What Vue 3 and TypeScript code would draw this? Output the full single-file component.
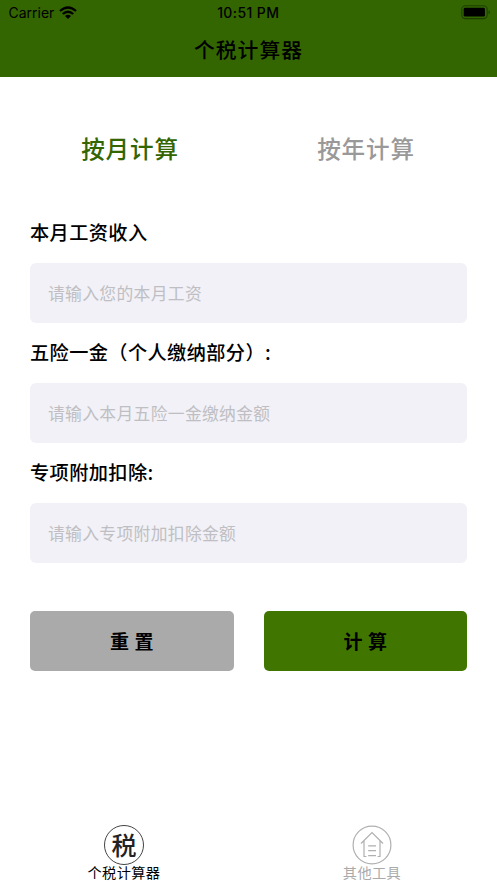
<script setup lang="ts">
import { reactive, ref } from 'vue'

interface Field {
  key: string
  label: string
  placeholder: string
}

const modes: string[] = ['按月计算', '按年计算']
const activeMode = ref(0)

const fields: Field[] = [
  { key: 'salary', label: '本月工资收入', placeholder: '请输入您的本月工资' },
  { key: 'insurance', label: '五险一金（个人缴纳部分）:', placeholder: '请输入本月五险一金缴纳金额' },
  { key: 'deduction', label: '专项附加扣除:', placeholder: '请输入专项附加扣除金额' },
]

const values = reactive<Record<string, string>>({ salary: '', insurance: '', deduction: '' })

function reset(): void {
  fields.forEach((f) => (values[f.key] = ''))
}
</script>

<template>
  <div class="screen">
    <header class="header">
      <div class="status">
        <div class="carrier">
          <span>Carrier</span>
          <svg class="wifi" viewBox="0 0 18 13" width="18" height="13">
            <path d="M0.2 4.2 Q9 -3.8 17.8 4.2 L16.2 5.8 Q9 -0.4 1.8 5.8 Z" />
            <path d="M3 7.2 Q9 1.8 15 7.2 L13.3 8.8 Q9 5.2 4.7 8.8 Z" />
            <path d="M6 10 Q9 7.4 12 10 L9 13 Z" />
          </svg>
        </div>
        <span class="time">10:51 PM</span>
        <svg class="battery" viewBox="0 0 30 15" width="30" height="15">
          <rect x="0.8" y="0.8" width="25.4" height="12.8" rx="3.6" fill="none" stroke="#1f3f00" stroke-width="1.1" />
          <rect x="2.7" y="2.8" width="21.2" height="8.8" rx="1.4" />
          <path d="M27.6 5.2 Q28.9 5.8 28.9 7.2 Q28.9 8.6 27.6 9.2 Z" fill="#1f3f00" />
        </svg>
      </div>
      <h1 class="title">个税计算器</h1>
    </header>

    <nav class="modes">
      <button
        v-for="(mode, i) in modes"
        :key="mode"
        class="mode"
        :class="{ active: i === activeMode }"
        @click="activeMode = i"
      >{{ mode }}</button>
    </nav>

    <form class="form" @submit.prevent>
      <label v-for="f in fields" :key="f.key" class="field">
        <span class="label">{{ f.label }}</span>
        <input v-model="values[f.key]" class="input" type="text" :placeholder="f.placeholder" />
      </label>
      <div class="actions">
        <button type="button" class="action" @click="reset">重 置</button>
        <button type="submit" class="action primary">计 算</button>
      </div>
    </form>

    <footer class="tabbar">
      <div class="tab current">
        <span class="seal">税</span>
        <span class="tab-label">个税计算器</span>
      </div>
      <div class="tab">
        <svg viewBox="0 0 40 40" width="40" height="40" fill="none" stroke="#b0b0b0" stroke-width="1.2">
          <circle cx="20" cy="20" r="18.9" />
          <path d="M9 18.5 L20 7.5 L31 18.5 M12 16 V31.5 H14.4 M28 16 V31.5 H25.6" />
          <path d="M16.2 20.8 H24 M16.2 25.6 H24 M16.2 30.6 H24" />
        </svg>
        <span class="tab-label">其他工具</span>
      </div>
    </footer>
  </div>
</template>

<style>
body {
  background: #fff;
}
</style>

<style scoped>
.screen {
  display: flex;
  flex-direction: column;
  height: 883px;
  overflow: hidden;
  box-sizing: border-box;
  background: #fff;
  color: #000;
  font-family: 'Noto Sans CJK SC', sans-serif;
}
button,
input {
  font-family: inherit;
  border: 0;
  margin: 0;
  padding: 0;
}
.header {
  height: 77px;
  flex: none;
  background: #360;
}
.status {
  display: grid;
  grid-template-columns: 1fr auto 1fr;
  align-items: center;
  height: 25px;
  padding: 0 6px 0 8.5px;
  font: 14px/25px Inter, sans-serif;
}
.carrier {
  display: flex;
  align-items: center;
  gap: 5px;
}
.wifi {
  margin-bottom: 1px;
}
.time {
  margin-right: 3px;
  font-weight: 500;
  font-size: 14px;
  letter-spacing: 0.4px;
}
.battery {
  justify-self: end;
}
.title {
  margin: 0;
  padding-top: 9px;
  font-size: 20.8px;
  line-height: 30px;
  font-weight: 500;
  letter-spacing: 1px;
  text-align: center;
}
.modes {
  display: grid;
  grid-template-columns: 236px 236px;
  padding: 41px 12px 0;
}
.mode {
  height: 60px;
  background: none;
  color: #999;
  font-size: 23.6px;
  font-weight: 500;
  letter-spacing: 0.8px;
}
.mode.active {
  color: #360;
}
.form {
  padding: 25px 30px 0;
}
.field {
  display: block;
  height: 120px;
}
.label {
  display: block;
  height: 60px;
  line-height: 59px;
  font-size: 19.2px;
  font-weight: 500;
  letter-spacing: 0.4px;
}
.input {
  display: block;
  width: 100%;
  height: 60px;
  box-sizing: border-box;
  padding: 0 18px 1px;
  border-radius: 6px;
  background: #f2f1f7;
  font-size: 16.8px;
  letter-spacing: 0.33px;
}
.input::placeholder {
  color: #bfbfc3;
}
.actions {
  display: grid;
  grid-template-columns: 1fr 1fr;
  gap: 30px;
  padding-top: 48px;
}
.action {
  height: 60px;
  padding-bottom: 2px;
  border-radius: 5px;
  background: #aaa;
  color: #000;
  font-size: 19px;
  font-weight: 700;
  word-spacing: 1px;
}
.action.primary {
  background: #407600;
}
.tabbar {
  display: grid;
  grid-template-columns: 1fr 1fr;
  margin-top: auto;
  height: 58px;
  padding-right: 1px;
}
.tab {
  display: flex;
  flex-direction: column;
  align-items: center;
  color: #aaa;
}
.tab.current {
  color: #000;
}
.seal {
  width: 40px;
  height: 40px;
  box-sizing: border-box;
  border: 1px solid #444;
  border-radius: 50%;
  color: #222;
  font-size: 25px;
  line-height: 36px;
  font-weight: 500;
  text-align: center;
}
.tab-label {
  font-size: 14.2px;
  line-height: 14px;
  letter-spacing: 0.4px;
}
</style>
